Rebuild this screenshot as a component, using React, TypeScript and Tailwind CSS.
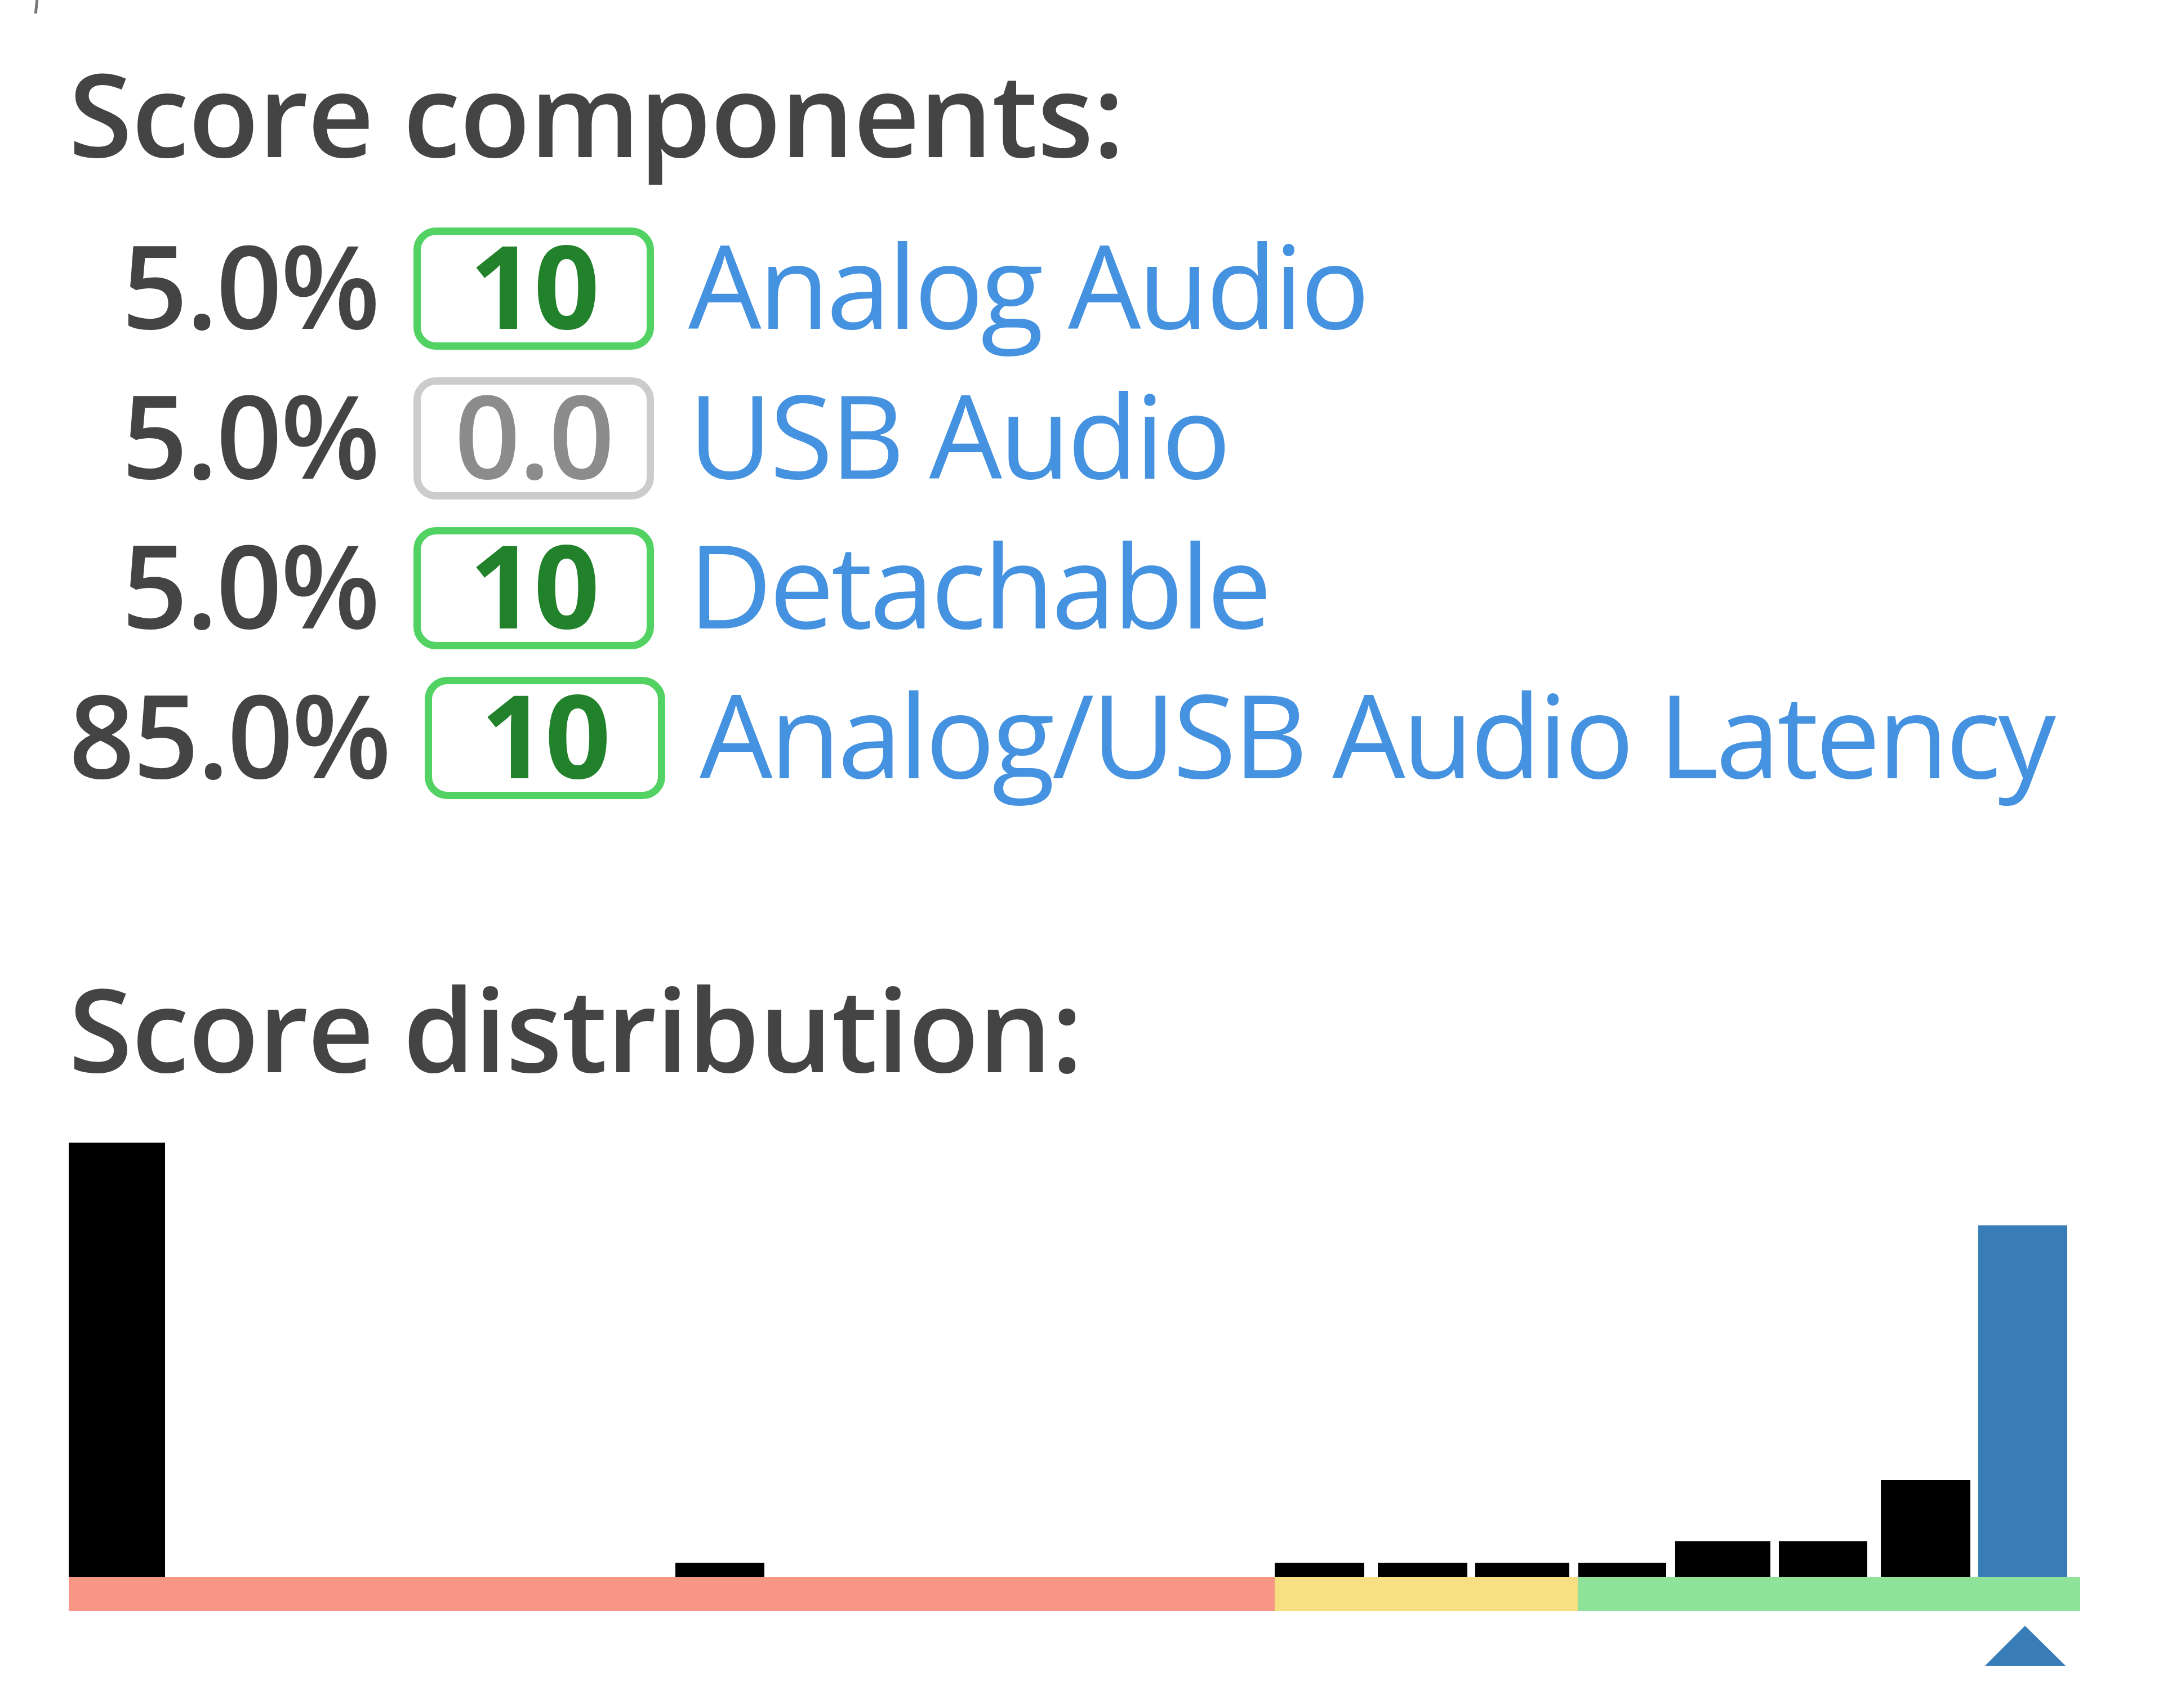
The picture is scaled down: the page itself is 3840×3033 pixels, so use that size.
import React from "react";

type Component = {
  pct: string;
  score: string;
  good: boolean;
  label: string;
};

const components: Component[] = [
  { pct: "5.0%", score: "10", good: true, label: "Analog Audio" },
  { pct: "5.0%", score: "0.0", good: false, label: "USB Audio" },
  { pct: "5.0%", score: "10", good: true, label: "Detachable" },
  { pct: "85.0%", score: "10", good: true, label: "Analog/USB Audio Latency" },
];

// bars in chart coordinates: [x, width, height]
const bars: [number, number, number][] = [
  [0, 171, 771],
  [1077, 158, 25],
  [2141, 159, 25],
  [2324, 159, 25],
  [2497, 167, 25],
  [2680, 156, 25],
  [2852, 169, 63],
  [3036, 157, 63],
  [3217, 159, 172],
];

function ScoreRow({ item }: { item: Component }) {
  return (
    <div className="flex items-baseline h-[266px]">
      <span className="inline-block min-w-[550px] text-right font-semibold tracking-[-3px] text-[#444444]">{item.pct}</span>
      <span
        className={
          item.good
            ? "ml-[62px] inline-block w-[427px] h-[217px] rounded-[40px] border-[13px] border-[#52d263] pb-[16px] text-center leading-[175px] font-bold tracking-[-3px] text-[#22812b]"
            : "ml-[62px] inline-block w-[427px] h-[217px] rounded-[40px] border-[13px] border-[#cccccc] pb-[16px] text-center leading-[175px] font-semibold tracking-[-3px] text-[#8c8c8c]"
        }
      >
        {item.score}
      </span>
      <a className="ml-[61px] text-[#4592e0] tracking-[-5px] whitespace-nowrap">{item.label}</a>
    </div>
  );
}

function Distribution() {
  const base = 771;
  return (
    <svg width={3580} height={945} viewBox="0 0 3580 945" className="block">
      {bars.map(([x, w, h], i) => (
        <rect key={i} x={x} y={base - h} width={w} height={h} fill="#000000" />
      ))}
      <rect x={3390} y={base - 624} width={158} height={624} fill="#387cb8" />
      <rect x={0} y={base} width={2141} height={61} fill="#f79684" />
      <rect x={2141} y={base} width={538} height={61} fill="#f6e083" />
      <rect x={2679} y={base} width={892} height={61} fill="#8fe29a" />
      <polygon points="3473,858 3402,929 3545,929" fill="#387cb8" />
    </svg>
  );
}

export default function App() {
  return (
    <div className="relative w-[3840px] min-h-[3033px] bg-white font-['Open_Sans',sans-serif] text-[205px] leading-[266px] pl-[122px] pt-[67px]">
      <div className="absolute left-[62px] top-0 w-[5px] h-[24px] bg-[#777777] rotate-[6deg]" />
      <h3 className="font-semibold tracking-[-1px] text-[#444444] mb-[39px]">Score components:</h3>
      <div className="flex flex-col">
        {components.map((c, i) => (
          <ScoreRow key={i} item={c} />
        ))}
      </div>
      <h3 className="mt-[256px] font-semibold tracking-[-1px] text-[#444444]">Score distribution:</h3>
      <div className="mt-[71px]">
        <Distribution />
      </div>
    </div>
  );
}
